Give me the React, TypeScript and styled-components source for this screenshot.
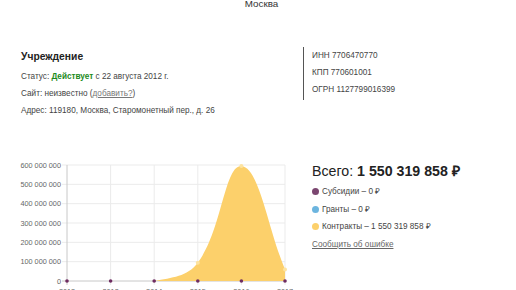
import styled, { createGlobalStyle } from 'styled-components';

const GlobalStyle = createGlobalStyle`
  body {
    margin: 0;
    background: #fff;
    font-family: 'Liberation Sans', Arial, sans-serif;
    color: #444;
  }
`;

const Page = styled.div`
  width: 516px;
  height: 290px;
  overflow: hidden;
`;

const City = styled.div`
  margin-top: -4px;
  padding-left: 7px;
  text-align: center;
  font-size: 9.8px;
  line-height: 15px;
  color: #333;
`;

const InfoRow = styled.div`
  display: flex;
  align-items: flex-start;
  margin-top: 36px;
`;

const Org = styled.div`
  width: 303px;
  padding: 2px 0 0 21px;
  box-sizing: border-box;
`;

const Title = styled.h2`
  margin: 0 0 3px;
  font-size: 10.3px;
  line-height: 16px;
  font-weight: bold;
  color: #222;
`;

const Line = styled.div`
  font-size: 8.2px;
  line-height: 17px;
  white-space: nowrap;
`;

const Status = styled.b`
  color: #1d8a1d;
`;

const SoftLink = styled.a`
  color: #777;
  text-decoration: underline;
`;

const Codes = styled.div`
  border-left: 1px solid #555;
  padding: 0 0 2px 8px;
`;

const StatsRow = styled.div`
  display: flex;
  margin-top: 36px;
`;

const ChartBox = styled.svg`
  display: block;
  flex: none;
  font-family: 'Liberation Sans', Arial, sans-serif;
`;

const Totals = styled.div`
  margin-left: 12px;
  padding-top: 6px;
`;

const Total = styled.div`
  font-size: 14.2px;
  line-height: 20px;
  color: #222;
  white-space: nowrap;
  margin-bottom: 2px;
`;

const Legend = styled.div`
  display: flex;
  align-items: center;
  gap: 3px;
  font-size: 8.2px;
  line-height: 17.5px;
  white-space: nowrap;
`;

const Dot = styled.span<{ $c: string }>`
  width: 7px;
  height: 7px;
  border-radius: 50%;
  background: ${(p) => p.$c};
`;

const Report = styled.a`
  display: block;
  font-size: 8.2px;
  line-height: 17px;
  color: #666;
  text-decoration: underline;
`;

const left = 67;
const right = 285;
const top = 165;
const bottom = 281;
const years = ['2012', '2013', '2014', '2015', '2016', '2017'];
const values = [0, 0, 0, 95, 595, 60];
const ticks = [600, 500, 400, 300, 200, 100, 0];

const xAt = (i: number) => left + ((right - left) * i) / 5;
const yAt = (v: number) => bottom - ((bottom - top) * v) / 600;
const fmt = (v: number) => (v === 0 ? '0' : `${v} 000 000`);

function curvePath() {
  const pts = values.map((v, i) => ({ x: xAt(i), y: yAt(v) }));
  const cps = pts.map((p, i) => {
    const a = pts[i - 1] || p;
    const b = pts[i + 1] || p;
    const d01 = Math.hypot(p.x - a.x, p.y - a.y);
    const d12 = Math.hypot(b.x - p.x, b.y - p.y);
    const s = d01 + d12 || 1;
    const fa = (0.4 * d01) / s;
    const fb = (0.4 * d12) / s;
    const cap = (y: number) => Math.min(bottom, Math.max(top, y));
    return {
      px: p.x - fa * (b.x - a.x),
      py: cap(p.y - fa * (b.y - a.y)),
      nx: p.x + fb * (b.x - a.x),
      ny: cap(p.y + fb * (b.y - a.y)),
    };
  });
  let d = `M${pts[0].x},${pts[0].y}`;
  for (let i = 1; i < pts.length; i++) {
    d += ` C${cps[i - 1].nx},${cps[i - 1].ny} ${cps[i].px},${cps[i].py} ${pts[i].x},${pts[i].y}`;
  }
  return d + ` L${right},${bottom} L${left},${bottom} Z`;
}

function Chart() {
  return (
    <ChartBox width={300} height={135} viewBox="0 155 300 135">
      {ticks.map((t) => (
        <g key={t}>
          <line x1={62} x2={right} y1={yAt(t)} y2={yAt(t)} stroke={t === 0 ? '#c8c8c8' : '#ebebeb'} />
          <text x={61} y={yAt(t) + 2.5} fontSize={7.3} fill="#666" textAnchor="end">
            {fmt(t)}
          </text>
        </g>
      ))}
      {years.map((y, i) => (
        <g key={y}>
          <line x1={xAt(i)} x2={xAt(i)} y1={top} y2={bottom + 4} stroke={i === 0 ? '#c8c8c8' : '#ebebeb'} />
          <text x={xAt(i)} y={bottom + 13} fontSize={7.3} fill="#666" textAnchor="middle">
            {y}
          </text>
        </g>
      ))}
      <path d={curvePath()} fill="#fcd06b" />
      {values.map((v, i) =>
        v > 0 ? <circle key={i} cx={xAt(i)} cy={yAt(v)} r={2} fill="#fde39f" /> : null
      )}
      {values.map((_, i) => (
        <circle key={`s${i}`} cx={xAt(i)} cy={bottom} r={1.8} fill="#6e2c61" />
      ))}
    </ChartBox>
  );
}

export default function App() {
  return (
    <Page>
      <GlobalStyle />
      <City>Москва</City>
      <InfoRow>
        <Org>
          <Title>Учреждение</Title>
          <Line>
            Статус: <Status>Действует</Status> с 22 августа 2012 г.
          </Line>
          <Line>
            Сайт: неизвестно (<SoftLink href="#">добавить?</SoftLink>)
          </Line>
          <Line>Адрес: 119180, Москва, Старомонетный пер., д. 26</Line>
        </Org>
        <Codes>
          <Line>ИНН 7706470770</Line>
          <Line>КПП 770601001</Line>
          <Line>ОГРН 1127799016399</Line>
        </Codes>
      </InfoRow>
      <StatsRow>
        <Chart />
        <Totals>
          <Total>
            Всего: <b>1 550 319 858 ₽</b>
          </Total>
          <Legend>
            <Dot $c="#7b4670" />
            Субсидии – 0 ₽
          </Legend>
          <Legend>
            <Dot $c="#6cb5df" />
            Гранты – 0 ₽
          </Legend>
          <Legend>
            <Dot $c="#fcd06b" />
            Контракты – 1 550 319 858 ₽
          </Legend>
          <Report href="#">Сообщить об ошибке</Report>
        </Totals>
      </StatsRow>
    </Page>
  );
}
